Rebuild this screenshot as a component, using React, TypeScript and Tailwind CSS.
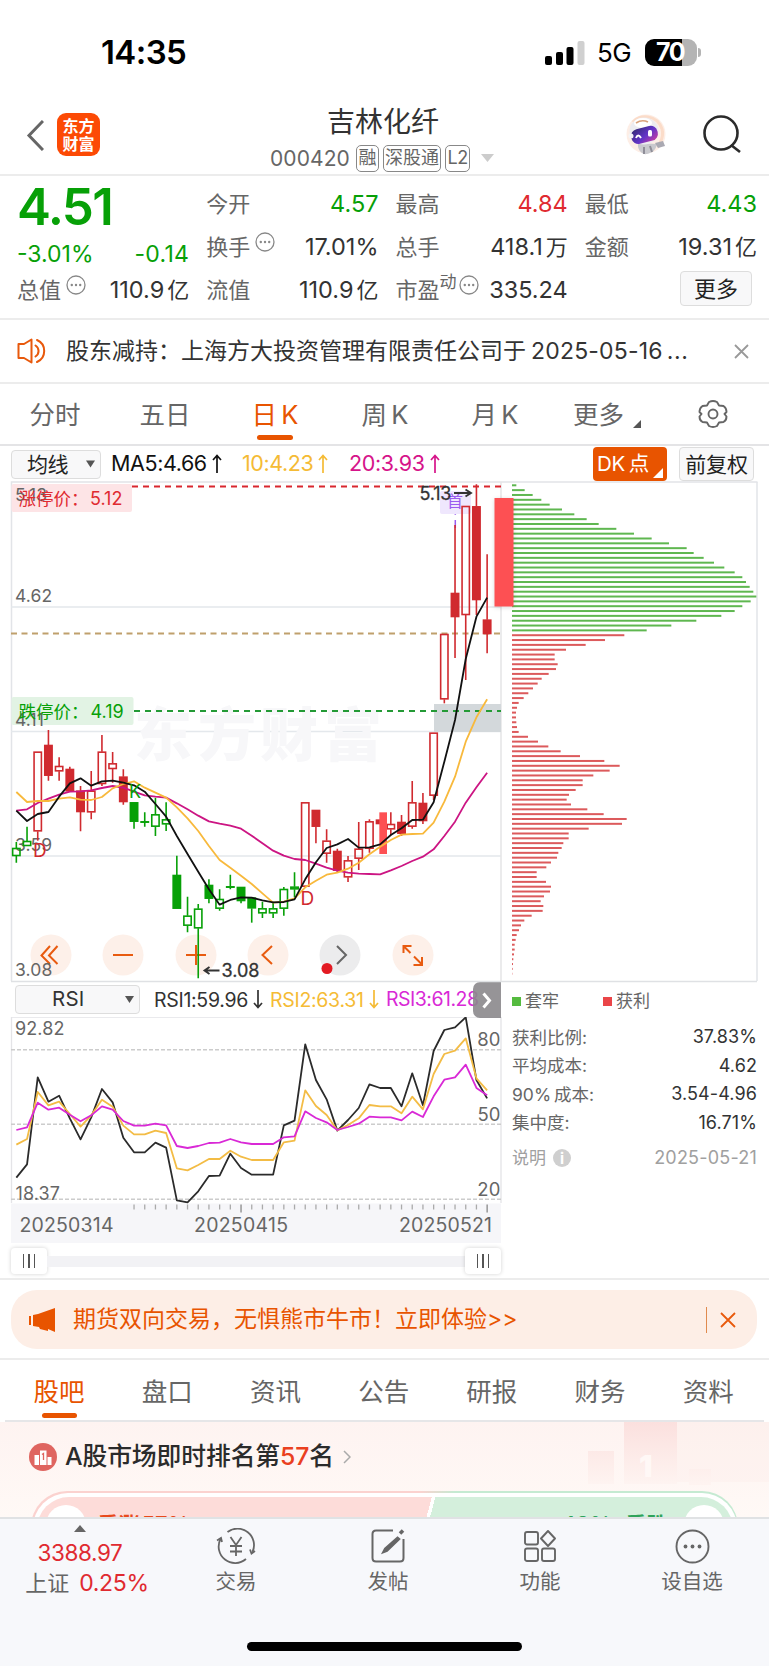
import React from 'react';

type Candle = [top: number, bottom: number, high: number, low: number, kind: 'r' | 'R' | 'g' | 'G'];

// Upper case kinds are filled bodies. Three chart units make one pixel.
const candles: Candle[] = [
  [384, 408, 366, 428, 'g'], [363, 378, 320, 378, 'g'], [95, 334, 95, 362, 'r'],
  [75, 167, 30, 182, 'R'], [138, 154, 112, 182, 'r'], [147, 214, 140, 214, 'R'],
  [212, 276, 198, 334, 'R'], [212, 277, 153, 298, 'r'], [95, 192, 45, 198, 'r'],
  [130, 147, 96, 188, 'r'], [170, 246, 148, 254, 'R'], [247, 305, 247, 326, 'G'],
  [304, 307, 277, 320, 'G'], [283, 320, 233, 348, 'g'], [298, 313, 247, 333, 'g'],
  [465, 566, 407, 566, 'G'], [587, 617, 530, 637, 'g'], [566, 625, 552, 775, 'g'],
  [495, 536, 478, 550, 'G'], [537, 566, 508, 572, 'g'], [499, 502, 464, 508, 'G'],
  [501, 543, 501, 550, 'G'], [533, 565, 533, 608, 'G'], [565, 580, 545, 594, 'g'],
  [565, 580, 545, 594, 'g'], [507, 566, 501, 587, 'g'], [500, 508, 457, 532, 'g'],
  [247, 500, 247, 500, 'r'], [270, 320, 270, 370, 'R'], [362, 401, 328, 428, 'r'],
  [393, 452, 386, 458, 'R'], [421, 472, 408, 486, 'r'], [386, 416, 306, 450, 'r'],
  [304, 386, 298, 398, 'r'], [299, 312, 299, 312, 'R'], [312, 328, 277, 346, 'r'],
  [306, 341, 285, 348, 'R'], [247, 320, 183, 326, 'r'], [249, 303, 219, 312, 'R'],
  [38, 227, 38, 240, 'r'], [-258, -62, -258, -50, 'r'], [-381, -309, -585, -186, 'R'],
  [-642, -315, -642, -120, 'r'], [-641, -360, -707, -315, 'R'], [-301, -258, -497, -200, 'R'],
];

const ma5 = [272, 303, 282, 276, 230, 190, 175, 197, 184, 182, 188, 196, 215, 252, 290, 348, 402, 455, 508, 554, 540, 532, 533, 541, 547, 546, 538, 478, 427, 384, 373, 357, 383, 382, 373, 345, 325, 300, 299, 247, 125, 0, -183, -310, -367];
const ma10 = [216, 246, 243, 243, 236, 232, 239, 240, 231, 205, 192, 184, 203, 218, 233, 262, 295, 333, 378, 420, 443, 467, 492, 520, 548, 545, 535, 502, 482, 464, 458, 446, 428, 403, 380, 360, 344, 342, 341, 308, 245, 170, 65, -8, -62];
const ma20 = [272, 268, 249, 236, 224, 215, 214, 211, 204, 198, 203, 215, 226, 230, 233, 250, 268, 287, 304, 311, 317, 326, 347, 370, 392, 407, 417, 420, 431, 443, 452, 458, 461, 462, 463, 451, 438, 423, 410, 388, 348, 305, 248, 202, 158];

const rsi1 = [593, 553, 292, 365, 347, 415, 478, 412, 327, 367, 473, 517, 517, 488, 503, 661, 667, 634, 588, 587, 521, 564, 584, 584, 584, 436, 422, 193, 300, 358, 452, 420, 384, 313, 324, 324, 379, 280, 376, 213, 150, 142, 112, 300, 355];
const rsi2 = [494, 477, 336, 376, 365, 402, 440, 406, 359, 380, 437, 463, 463, 452, 459, 565, 571, 555, 537, 537, 512, 530, 540, 540, 540, 487, 482, 331, 378, 405, 451, 435, 415, 375, 379, 379, 400, 350, 388, 282, 222, 212, 175, 295, 331];
const rsi3 = [450, 442, 368, 389, 383, 404, 424, 406, 379, 389, 423, 437, 437, 431, 436, 498, 504, 498, 489, 488, 477, 487, 492, 492, 492, 472, 469, 394, 414, 427, 450, 441, 431, 410, 412, 412, 421, 395, 411, 349, 299, 292, 254, 324, 346];

const trapped = [13, 38, 62, 88, 113, 150, 187, 224, 260, 313, 366, 419, 471, 524, 545, 575, 606, 637, 668, 691, 702, 713, 724, 733, 716, 691, 668, 628, 553, 478, 404];
const profit = [337, 279, 221, 162, 128, 128, 137, 132, 110, 89, 77, 63, 49, 35, 20, 15, 12, 12, 13, 15, 20, 48, 78, 109, 146, 204, 277, 323, 293, 244, 212, 212, 191, 171, 164, 177, 226, 275, 344, 330, 230, 170, 170, 154, 149, 139, 135, 117, 103, 74, 74, 102, 117, 114, 96, 86, 94, 92, 59, 37, 27, 21, 14, 11, 8, 8, 6, 4, 3, 2, 1];

const xAt = (i: number) => 49 + i * 32.1;
const toPoints = (values: number[]) => values.map((v, i) => `${xAt(i)},${v}`).join(' ');

const RED = '#d02a2f';
const GREEN = '#07a007';

const StatusBar: React.FC = () => (
  <div className="flex h-[98px] items-center pl-[101px] pr-[68px] pt-[7px]">
    <span className="text-[33px] font-semibold leading-none tracking-[-0.6px] text-black">14:35</span>
    <svg className="ml-auto" width="40" height="26" viewBox="0 0 40 26">
      <rect x="0" y="16" width="7" height="9" rx="2" />
      <rect x="11" y="12" width="7" height="13" rx="2" />
      <rect x="21.500" y="7" width="7" height="18" rx="2" />
      <rect x="32.500" y="1" width="7" height="24" rx="2" fill="#d0d0d0" />
    </svg>
    <span className="ml-[12px] w-[36px] text-[26px] leading-none tracking-[-0.5px] text-black">5G</span>
    <div className="ml-[12px] flex h-[27px] w-[52px] items-center justify-center rounded-[9px] bg-[linear-gradient(90deg,#000_71%,#b4b4b4_71%)] pr-[2px] text-[25px] font-bold leading-none tracking-[-1.5px] text-white">
      70
    </div>
    <div className="ml-[1px] h-[9px] w-[3px] rounded-r-full bg-[#b4b4b4]" />
  </div>
);

const Header: React.FC = () => (
  <header className="flex h-[78px] items-start border-b-2 border-[#ececec] pl-[26px] pr-[27px]">
    <svg className="mt-[22px]" width="18" height="31" viewBox="0 0 18 31" fill="none" stroke="#666" strokeWidth="3">
      <path d="M17 1 3 15.500 17 30" />
    </svg>
    <div className="ml-[13px] mt-[15px] flex h-[43px] w-[43px] flex-col items-center justify-center rounded-[9px] bg-[#fc4a05] text-[16px] font-bold leading-[18px] text-white">
      <span>东方</span>
      <span>财富</span>
    </div>
    <div className="ml-[170px] w-[224px]">
      <h1 className="mt-[9px] pl-[57px] text-[28px] leading-[30px] text-[#333]">吉林化纤</h1>
      <div className="mt-[7px] flex h-[28px] items-center gap-[4px] text-[#666]">
        <span className="w-[82px] text-[21px] leading-none tracking-[0.1px]">000420</span>
        <span className="ml-[1px] flex h-[27px] w-[23px] items-center justify-center rounded-[5px] border border-[#888] text-[18px] leading-none">融</span>
        <span className="flex h-[27px] w-[59px] items-center justify-center rounded-[5px] border border-[#888] text-[18px] leading-none">深股通</span>
        <span className="flex h-[27px] w-[25px] items-center justify-center rounded-[5px] border border-[#888] text-[18px] leading-none tracking-[-0.5px]">L2</span>
        <svg className="ml-[7px] shrink-0" width="13" height="8" viewBox="0 0 13 8"><path d="M0 0h13L6.500 8z" fill="#ccc" /></svg>
      </div>
    </div>
    <svg className="ml-auto mt-[16px]" width="44" height="44" viewBox="0 0 44 44">
      <defs>
        <linearGradient id="visor" x1="0" y1="0" x2="1" y2="1">
          <stop offset="0" stopColor="#312a6e" />
          <stop offset=".55" stopColor="#6234c8" />
          <stop offset="1" stopColor="#d23fa0" />
        </linearGradient>
      </defs>
      <circle cx="23" cy="20" r="19.500" fill="#fdeee6" />
      <path d="M10 8C16 0 34 0 39 15c1.500 5 0 10-2 14" fill="none" stroke="#fbdcc9" strokeWidth="3" />
      <path d="M15 29c-1 7 4 12 9 11s9-4 10-10z" fill="#c9c9ce" />
      <path d="M32 29l8-2 2 5-7 2z" fill="#aaa9b2" />
      <ellipse cx="21" cy="17" rx="14.500" ry="13.500" fill="#ececf0" />
      <ellipse cx="20" cy="9" rx="9" ry="5" fill="#fff" />
      <path d="M13 9q6-4 12-1" stroke="#d9a27b" strokeWidth="1.600" fill="none" />
      <rect x="8" y="13.500" width="27" height="15" rx="7" fill="url(#visor)" transform="rotate(-14 21 21)" />
      <path d="M13 24q2-5 5 0" stroke="#fff" strokeWidth="2" fill="none" />
      <rect x="25" y="16" width="4" height="6.500" rx="1.500" fill="#fff" />
      <circle cx="8" cy="22" r="2.500" fill="#f4f4f6" />
      <path d="M21 33v7M27 32l2 6" stroke="#8f8e98" strokeWidth="2" />
    </svg>
    <svg className="ml-[36px] mt-[17px]" width="39" height="39" viewBox="0 0 39 39" fill="none" stroke="#2b2b2b" strokeWidth="2.600">
      <circle cx="18" cy="18" r="16.500" />
      <path d="M28 30 37 37" />
    </svg>
  </header>
);

const Dots: React.FC = () => (
  <svg className="mb-[10px] ml-[5px] shrink-0" width="20" height="20" viewBox="0 0 20 20" fill="none" stroke="#888" strokeWidth="1.300">
    <circle cx="10" cy="10" r="9" />
    <g fill="#888" stroke="none"><circle cx="5.800" cy="10" r="1.200" /><circle cx="10" cy="10" r="1.200" /><circle cx="14.200" cy="10" r="1.200" /></g>
  </svg>
);

interface StatProps {
  label: string;
  value: string;
  unit?: string;
  valueClass?: string;
  dots?: boolean;
  sup?: string;
}

const Stat: React.FC<StatProps> = ({ label, value, unit, valueClass = 'text-[#333]', dots, sup }) => (
  <div className="flex h-[43px] items-center whitespace-nowrap text-[22px] leading-none">
    <span className="text-[#666]">{label}</span>
    {sup && <span className="mb-[14px] text-[17px] text-[#666]">{sup}</span>}
    {dots && (sup ? <span className="-ml-[3px]"><Dots /></span> : <Dots />)}
    <span className={`ml-auto text-[23.500px] ${valueClass}`}>{value}</span>
    {unit && <span className="ml-[3px] text-[#333]">{unit}</span>}
  </div>
);

const Quote: React.FC = () => (
  <section className="grid h-[144px] grid-cols-4 gap-x-[17px] border-b-2 border-[#ececec] pl-[17px] pr-[12px] pt-[6px]">
    <div>
      <div className="h-[52px] pt-[1px] text-[51px] font-semibold leading-[48px] tracking-[-1.600px] text-[#07a007]">4.51</div>
      <div className="flex h-[34px] items-center justify-between pt-[6px] text-[23px] leading-none text-[#07a007]">
        <span>-3.01%</span>
        <span className="tracking-[0.3px]">-0.14</span>
      </div>
      <Stat label="总值" value="110.9" unit="亿" dots />
    </div>
    <div>
      <Stat label="今开" value="4.57" valueClass="text-[#07a007]" />
      <Stat label="换手" value="17.01%" dots />
      <Stat label="流值" value="110.9" unit="亿" />
    </div>
    <div>
      <Stat label="最高" value="4.84" valueClass="text-[#e02a30]" />
      <Stat label="总手" value="418.1" unit="万" />
      <Stat label="市盈" sup="动" value="335.24" dots />
    </div>
    <div>
      <Stat label="最低" value="4.43" valueClass="text-[#07a007]" />
      <Stat label="金额" value="19.31" unit="亿" />
      <button className="ml-auto mr-[5px] mt-[3px] flex h-[35px] w-[72px] items-center justify-center rounded-[4px] border border-[#ddd] bg-[#f8f8f9] text-[22px] leading-none text-[#222]">更多</button>
    </div>
  </section>
);

const Notice: React.FC = () => (
  <section className="flex h-[64px] items-center border-b-2 border-[#ececec] pl-[17px] pr-[20px]">
    <svg width="31" height="26" viewBox="0 0 31 26" fill="none" stroke="#e8590c" strokeWidth="2" strokeLinejoin="round">
      <path d="M14.500 1.500v23L7 20H1.500V6H7z" />
      <path d="M18.500 7.500a6.500 6.500 0 0 1 0 11M20 2a12 12 0 0 1 0 22" strokeLinecap="round" />
    </svg>
    <div className="ml-[18px] flex items-center whitespace-nowrap text-[23px] leading-none text-[#333]">
      <span>股东减持：上海方大投资管理有限责任公司于</span>
      <span className="ml-[5px] tracking-[0.2px]">2025-05-16</span>
      <span className="ml-[4px] tracking-[0.6px]">...</span>
    </div>
    <svg className="ml-auto" width="15" height="15" viewBox="0 0 15 15" stroke="#999" strokeWidth="1.800"><path d="m1 1 13 13M14 1 1 14" /></svg>
  </section>
);

const periods = ['分时', '五日', '日 K', '周 K', '月 K'];

const PeriodTabs: React.FC = () => (
  <nav className="flex h-[62px] items-center border-b-2 border-[#e4e4e6] text-[25.500px] leading-none text-[#666]">
    {periods.map((p) => (
      <span key={p} className={`relative flex h-full w-[110px] items-center justify-center pt-[1px] [word-spacing:-3px] ${p === '日 K' ? 'text-[#e85400]' : ''}`}>
        {p}
        {p === '日 K' && <i className="absolute bottom-[4px] left-[37px] h-[5px] w-[36px] rounded-full bg-[#e85400]" />}
      </span>
    ))}
    <span className="ml-[23px] pt-[1px]">更多</span>
    <svg className="ml-[9px] mt-[20px]" width="8" height="8" viewBox="0 0 8 8"><path d="M8 0v8H0z" fill="#555" /></svg>
    <svg className="ml-[57px]" width="30" height="28" viewBox="0 0 30 28" fill="none" stroke="#666" strokeWidth="1.900" strokeLinejoin="round">
      <path d="M11 2q4-2 8 0l2 3.500 4.500.5q3 2 3 6l-2 2 2 2.500q0 4-3 5.500l-4.500.5L19 26q-4 2-8 0l-2-3.500L4.500 22q-3-1.500-3-5.500l2-2.500-2-2q0-4 3-6L9 5.500z" />
      <circle cx="15" cy="14" r="4.500" />
    </svg>
  </nav>
);

const Arrow: React.FC<{ down?: boolean }> = ({ down }) => (
  <svg className={`ml-[5px] inline-block align-[-2px] ${down ? 'rotate-180' : ''}`} width="10" height="19" viewBox="0 0 10 19" fill="none" stroke="currentColor" strokeWidth="1.700">
    <path d="M5 19V1.500M1 6l4-4.500L9 6" />
  </svg>
);

const MaBar: React.FC = () => (
  <div className="flex h-[35px] items-center pl-[11px] pt-px text-[21.500px] leading-none tracking-[-0.4px]">
    <button className="flex h-[29px] w-[90px] items-center rounded-[4px] border border-[#ddd] bg-[#f8f8f9] pl-[15px] text-[21px] text-[#222]">
      均线
      <svg className="ml-auto mr-[5px]" width="9" height="8" viewBox="0 0 10 8"><path d="M0 0h10L5 8z" fill="#555" /></svg>
    </button>
    <span className="ml-[10px] w-[131px] whitespace-nowrap text-[#111]">MA5:4.66<Arrow /></span>
    <span className="w-[107px] whitespace-nowrap text-[#f5bb35]">10:4.23<Arrow /></span>
    <span className="whitespace-nowrap text-[#d6148a]">20:3.93<Arrow /></span>
    <button className="relative ml-auto h-[34px] w-[74px] rounded-[4px] bg-[#e85400] pl-[4px] text-left text-[20.500px] tracking-[-0.2px] text-white [word-spacing:-2px]">
      DK 点
      <svg className="absolute bottom-[3px] right-[4px]" width="10" height="10" viewBox="0 0 10 10"><path d="M10 0v10H0z" fill="#fff" /></svg>
    </button>
    <button className="ml-[12px] mr-[15px] h-[34px] w-[75px] whitespace-nowrap rounded-[4px] border border-[#ddd] bg-[#f8f8f9] text-[21px] tracking-[-0.2px] text-[#222]">前复权</button>
  </div>
);

const KLineChart: React.FC = () => (
  <svg className="relative z-10 shrink-0 overflow-visible" width="502" height="501" viewBox="0 481 502 501" fill="none">
    <path d="M11.500 981V482h746" stroke="#e2e4e8" strokeWidth="1.500" />
    <path d="M11 981.500h746" stroke="#dfe1e4" strokeWidth="1.500" />
    <path d="M11 607h490M11 731.500h490M11 856h490" stroke="#e4e8ec" strokeWidth="1.500" />
    <path d="M501 482v499" stroke="#e4e4e6" strokeWidth="1.500" />
    <g fontSize="58" fontWeight="900" fill="#f7f7f9">
      <text x="134" y="756">东</text><text x="198" y="756">方</text><text x="260" y="756">财</text><text x="324" y="756">富</text>
    </g>
    <rect x="434" y="704" width="67" height="28" fill="#d3d8db" />

    <g fill="#fdf0e9">
      <circle cx="51" cy="955" r="20.500" /><circle cx="123" cy="955" r="20.500" /><circle cx="196" cy="955" r="20.500" />
      <circle cx="268" cy="955" r="20.500" /><circle cx="413" cy="955" r="20.500" />
    </g>
    <circle cx="340" cy="955" r="20.500" fill="#ececed" />
    <g stroke="#e85b10" strokeWidth="2">
      <path d="m50 946-8.500 9.500L50 964M57.500 946l-8.500 9.500 8.500 8.500M113 955h20M186 955h20M196 945v20M272 946l-9.500 9 9.500 9" />
      <path d="M410.500 953 403.500 946M403.500 953v-7h8M414 956.500l8 8M422 957v8h-8.500" />
    </g>
    <path d="m337 946 9 9-9 9" stroke="#666" strokeWidth="2" />
    <circle cx="327" cy="968.500" r="5.500" fill="#e31b23" />

    <rect x="11.500" y="484" width="120.500" height="28" rx="2" fill="#fde4e6" />
    <rect x="11.500" y="697" width="122" height="28" rx="2" fill="#e2f3e4" />
    <path d="M132 486.500h369" stroke="#d9272e" strokeWidth="1.800" strokeDasharray="6 5" />
    <path d="M11 633.500h490" stroke="#bfa06c" strokeWidth="1.800" strokeDasharray="6 4.500" />
    <path d="M134 711h367" stroke="#249a36" strokeWidth="1.800" strokeDasharray="6 5" />

    <g fontSize="17.500" fill="#666" letterSpacing=".15">
      <text x="15" y="501">5.13</text><text x="15" y="601.500">4.62</text><text x="15" y="725.500">4.11</text>
      <text x="15" y="850.500">3.59</text><text x="15" y="975.500">3.08</text>
    </g>
    <g fontSize="17.500">
      <text x="18.500" y="505" fill="#e02a30">涨停价：</text><text x="90" y="505" fontSize="18" fill="#e02a30">5.12</text>
      <text x="18.500" y="718" fill={GREEN}>跌停价：</text><text x="90.500" y="718" fontSize="18" fill={GREEN}>4.19</text>
    </g>

    <rect x="440" y="491" width="31" height="23" rx="2" fill="#efe7fd" />
    <text x="447" y="506.500" fontSize="16" fill="#9a5cf0">首</text>
    <path d="M455.300 514v.8M455.300 520v8" stroke="#9a5cf0" strokeWidth="1.500" />

    <g transform="translate(0 720) scale(.33333)">
      {candles.map(([top, bottom, high, low, kind], i) => {
        const color = kind === 'r' || kind === 'R' ? RED : GREEN;
        const filled = kind === 'R' || kind === 'G';
        const x = xAt(i);
        return (
          <g key={i} stroke={color} strokeWidth="4.800">
            <path d={`M${x} ${high}V${top}M${x} ${bottom}V${low}`} />
            <rect x={x - 11} y={top + 1.5} width="22" height={Math.max(bottom - top - 3, 1)} fill={filled ? color : 'none'} />
          </g>
        );
      })}
      <rect x="1138" y="277" width="23" height="125" fill="#fd5053" />
      <g strokeWidth="5.400" strokeLinejoin="round">
        <polyline points={toPoints(ma20)} stroke="#cc1583" />
        <polyline points={toPoints(ma10)} stroke="#f8b93c" />
        <polyline points={toPoints(ma5)} stroke="#111" />
      </g>
    </g>
    <text x="33" y="856.500" fontSize="19" fill={RED}>D</text>
    <text x="300.500" y="905" fontSize="19" fill={RED}>D</text>
    <text x="129" y="798" fontSize="18" fill={GREEN}>K</text>

    <text x="419.500" y="499.500" fontSize="18" letterSpacing="-.2" fill="#333" stroke="#333" strokeWidth=".3">5.13</text>
    <path d="M454 493h16M465.500 489.500l5.500 3.500-5.500 3.500" stroke="#333" strokeWidth="1.900" />
    <text x="221.500" y="976.500" fontSize="18" fill="#333" stroke="#333" strokeWidth=".3">3.08</text>
    <path d="M219.500 970.500h-14M209.500 967l-5 3.500 5 3.500" stroke="#333" strokeWidth="1.900" />
    <rect x="494.500" y="498" width="19" height="108.500" fill="#fd5053" className="drop-shadow-sm" />
  </svg>
);

const ChipChart: React.FC = () => (
  <svg className="shrink-0" width="267" height="501" viewBox="502 481 267 501">
    <path d="M757 482v499" stroke="#e2e4e8" strokeWidth="1.500" />
    {[...trapped, ...profit].map((w, i) => (
      <rect key={i} x="512" y={484.3 + i * 4.836} width={w / 3} height="2" fill={i < trapped.length ? '#5fb750' : '#dc5a5c'} />
    ))}
  </svg>
);

const RsiChart: React.FC = () => (
  <svg width="502" height="226" viewBox="0 1017 502 226" fill="none">
    <rect x="11" y="1203.500" width="490" height="39.500" fill="#f6f6f9" />
    <path d="M11.500 1203v-186H501v186" stroke="#e4e4e7" strokeWidth="1.300" />
    <path d="M11 1049.700h490M11 1124.300h490M11 1199.300h490" stroke="#ccc" strokeWidth="1.500" strokeDasharray="4 2" />
    <g transform="translate(0 980) scale(.33333)" strokeWidth="5.400" strokeLinejoin="round">
      <polyline points={toPoints(rsi1)} stroke="#2b2b2b" />
      <polyline points={toPoints(rsi2)} stroke="#f3bc45" />
      <polyline points={toPoints(rsi3)} stroke="#d929d6" />
    </g>
    {Array.from({ length: 34 }, (_, k) => {
      const big = k === 10 || k === 33;
      const x = xAt(k + 11) / 3;
      return <path key={k} d={`M${x} 1204.500v${big ? 8 : 5}`} stroke={big ? '#888' : '#aaa'} strokeWidth="1.300" />;
    })}
    <g fill="#666" fontSize="18" letterSpacing=".1">
      <text x="15" y="1034.500">92.82</text><text x="15.500" y="1200">18.37</text>
      <g fontSize="18.500" textAnchor="end">
        <text x="500.500" y="1046">80</text><text x="500.500" y="1121">50</text><text x="500.500" y="1195.500">20</text>
      </g>
    </g>
    <g fill="#666" fontSize="19.500">
      <text x="19.500" y="1232" textLength="94">20250314</text>
      <text x="194" y="1232" textLength="94">20250415</text>
      <text x="399" y="1232" textLength="93">20250521</text>
    </g>
  </svg>
);

const Handle: React.FC = () => (
  <div className="flex h-[26px] w-[36px] items-center justify-center gap-[4px] rounded-[4px] bg-white shadow-[0_0_4px_rgba(0,0,0,0.18)]">
    <i className="h-[14px] w-[1.500px] bg-[#555]" />
    <i className="h-[14px] w-[1.500px] bg-[#555]" />
    <i className="h-[14px] w-[1.500px] bg-[#555]" />
  </div>
);

const chipStats = [
  ['获利比例:', '37.83%'],
  ['平均成本:', '4.62'],
  ['90% 成本:', '3.54-4.96'],
  ['集中度:', '16.71%'],
];

const Indicators: React.FC = () => (
  <section className="flex h-[298px] border-b-2 border-[#ececec]">
    <div className="w-[502px]">
      <div className="relative flex h-[35px] items-center pl-[15px] text-[19.500px] leading-none tracking-[-0.3px]">
        <button className="flex h-[29px] w-[125px] items-center rounded-[4px] border border-[#ddd] bg-[#f8f8f9] pl-[36px] text-[20.500px] tracking-[0.2px] text-[#333]">
          RSI
          <svg className="ml-auto mr-[5px]" width="9" height="7" viewBox="0 0 9 7"><path d="M0 0h9L4.500 7z" fill="#555" /></svg>
        </button>
        <span className="ml-[14px] w-[116px] whitespace-nowrap pt-px text-[#333]">RSI1:59.96<Arrow down /></span>
        <span className="w-[116px] whitespace-nowrap pt-px text-[#f5bb35]">RSI2:63.31<Arrow down /></span>
        <span className="whitespace-nowrap pt-px tracking-[-0.5px] text-[#d929d6]">RSI3:61.28</span>
        <button className="absolute right-[1px] top-0 flex h-[36px] w-[28px] items-center justify-center rounded-l-[7px] bg-[#8b888c]/90">
          <svg width="10" height="17" viewBox="0 0 10 17" fill="none" stroke="#fff" strokeWidth="3"><path d="m1.500 1.500 6 7-6 7" /></svg>
        </button>
      </div>
      <RsiChart />
      <div className="ml-[11px] mr-px mt-[5px] flex items-center">
        <Handle />
        <div className="h-[11px] flex-1 bg-[#f2f2f5]" />
        <Handle />
      </div>
    </div>
    <div className="flex-1 pl-[10px] pr-[12px] pt-[5px] text-[17.500px] leading-none text-[#666]">
      <div className="flex h-[29px] items-center text-[17px]">
        <i className="mr-[4px] h-[9px] w-[9px] bg-[#55bb3f]" />套牢
        <i className="ml-[44px] mr-[4px] h-[9px] w-[9px] bg-[#ea4548]" />获利
      </div>
      <div className="mt-[7px]">
        {chipStats.map(([label, value]) => (
          <div key={label} className="flex h-[28.600px] items-center justify-between">
            <span className="[word-spacing:-2px]">{label}</span>
            <span className="text-[18px] tracking-[0.1px] text-[#333]">{value}</span>
          </div>
        ))}
      </div>
      <div className="mt-[7px] flex h-[28px] items-center text-[#a0a0a0]">
        <span className="text-[17px]">说明</span>
        <span className="ml-[7px] flex h-[18px] w-[18px] items-center justify-center rounded-full bg-[#cfcfcf] text-[15px] font-bold text-white">i</span>
        <span className="ml-auto text-[18px] tracking-[0.2px]">2025-05-21</span>
      </div>
    </div>
  </section>
);

const Banner: React.FC = () => (
  <section className="h-[80px] border-b-2 border-[#ececec] pl-[11px] pr-[12px] pt-[10px]">
    <div className="flex h-[59px] items-center rounded-[26px] bg-[#fdeee6] pl-[18px] pr-[21px] text-[#e85400]">
      <svg width="28" height="24" viewBox="0 0 28 24" fill="#e85400">
        <path d="M0 8h2v9H0zM4 7l5-1 17-6v24l-7-3v2l-8-2-1-2-6-1z" />
      </svg>
      <span className="ml-[16px] whitespace-nowrap text-[23px] leading-none">期货双向交易，无惧熊市牛市！立即体验&gt;&gt;</span>
      <i className="ml-auto h-[26px] w-[1.500px] bg-[#e08a4e]" />
      <svg className="ml-[13px]" width="16" height="16" viewBox="0 0 16 16" stroke="#e8590c" strokeWidth="1.800"><path d="m1 1 14 14M15 1 1 15" /></svg>
    </div>
  </section>
);

const sections = ['股吧', '盘口', '资讯', '公告', '研报', '财务', '资料'];

const SectionTabs: React.FC = () => (
  <nav className="mx-[5px] flex h-[62px] items-center border-b-2 border-[#e6e6e8] text-[25.500px] leading-none text-[#666]">
    {sections.map((s, i) => (
      <span key={s} className={`relative flex h-full w-[108.200px] items-center justify-center pt-[3px] ${i === 0 ? 'text-[#e85400]' : ''}`}>
        {s}
        {i === 0 && <i className="absolute bottom-[2px] left-[37px] h-[5px] w-[35px] rounded-full bg-[#e85400]" />}
      </span>
    ))}
  </nav>
);

const Ranking: React.FC = () => (
  <section className="relative h-[95px] overflow-hidden bg-[linear-gradient(180deg,#fef3f1,#fff9f6)]">
    <svg className="absolute right-0 top-0" width="250" height="64" viewBox="0 0 250 64">
      <defs>
        <linearGradient id="podium" x1="0" y1="0" x2="0" y2="1">
          <stop offset="0" stopColor="#fbe0de" />
          <stop offset="1" stopColor="#fef4f1" />
        </linearGradient>
      </defs>
      <path d="M105 0h145v60H105z" fill="#fbe6e3" opacity=".2" />
      <path d="M69 29h26v33H69zM105 0h53v62h-53zM170 47h22v16h-22z" fill="url(#podium)" />
      <text x="120" y="55" fontSize="30" fontWeight="900" fill="#fff8f6">1</text>
    </svg>
    <div className="relative flex h-[69px] items-center pl-[29px]">
      <svg width="28" height="28" viewBox="0 0 28 28">
        <circle cx="14" cy="14" r="14" fill="#df6560" />
        <path d="M5.500 12h4.500v10H5.500zM11 7.500h6.500V22H11zM18.500 14h4v8h-4z" fill="#fff" />
        <path d="m13 11.500 1.500-1V17" stroke="#df6560" strokeWidth="1.300" fill="none" />
      </svg>
      <span className="ml-[8px] text-[24.800px] font-medium leading-none tracking-[-0.1px] text-[#2b2b2b]">A股市场即时排名第<span className="text-[#ea4020]">57</span>名</span>
      <svg className="ml-[9px]" width="8" height="14" viewBox="0 0 8 14" fill="none" stroke="#aaa" strokeWidth="1.500"><path d="m1 1 6 6-6 6" /></svg>
    </div>
    <div className="relative mx-[31px] h-[60px] rounded-t-[36px] bg-[linear-gradient(90deg,#fbd2cf_55%,#c5ead2_60%)] p-[1.500px]">
      <div className="h-full rounded-t-[35px] bg-white px-[4px] pt-[4px]">
        <div className="flex h-full items-start justify-between rounded-t-[32px] bg-[linear-gradient(105deg,#fddcd9_55.600%,#fff_55.600%,#fff_56.100%,#d4efdc_56.100%)] px-[9px] pt-[8px] text-[21px] font-bold leading-none">
          <i className="h-[40px] w-[40px] rounded-full bg-white" />
          <span className="ml-[12px] mt-[9px] text-[#e84a1c]">看涨</span>
          <span className="ml-[2px] mt-[8px] text-[22px] font-medium text-[#e84a1c]">57%</span>
          <span className="ml-auto mt-[8px] text-[22px] font-medium text-[#2fa35a]">43%</span>
          <span className="ml-[14px] mr-[16px] mt-[9px] text-[#2fa35a]">看跌</span>
          <i className="h-[40px] w-[40px] rounded-full bg-white" />
        </div>
      </div>
    </div>
  </section>
);

const TradeIcon = () => (
  <svg width="40" height="36" viewBox="0 0 40 36" fill="none" stroke="#666" strokeWidth="1.800">
    <path d="M11.500 4A16.500 16.500 0 0 1 36.500 24M30 31A16.500 16.500 0 0 1 4.500 11" />
    <path d="M1 12.500 5 10l1 4M39 23l-3.500 2.500-1.500-4" />
    <path d="m14.500 9 5.500 8 5.500-8M20 17v11M14 18h12M14 23.500h12" />
  </svg>
);

const PostIcon = () => (
  <svg width="34" height="34" viewBox="0 0 34 34" fill="none" stroke="#666" strokeWidth="2">
    <path d="M22 1.500H5Q1.500 1.500 1.500 5v24q0 3.500 3.500 3.500h24q3.500 0 3.500-3.500V10" />
    <path d="m26.500 8.500 1.800 1.500L16 22l-4 1.500 2-4z" fill="#666" />
    <path d="m29 4.500 3-3" strokeWidth="3.500" />
  </svg>
);

const GridIcon = () => (
  <svg width="32" height="32" viewBox="0 0 32 32" fill="none" stroke="#666" strokeWidth="1.900">
    <rect x="1" y="2" width="13" height="12.500" rx="2" />
    <path d="m24 1 7 7.500-7 7.500-7-7.500z" strokeLinejoin="round" />
    <rect x="1" y="18.500" width="13" height="12.500" rx="2" />
    <rect x="18" y="18.500" width="13" height="12.500" rx="2" />
  </svg>
);

const MoreIcon = () => (
  <svg width="35" height="35" viewBox="0 0 35 35" fill="#666">
    <circle cx="17.500" cy="17.500" r="16" fill="none" stroke="#666" strokeWidth="1.900" />
    <circle cx="10.500" cy="17.500" r="1.900" /><circle cx="17.500" cy="17.500" r="1.900" /><circle cx="24.500" cy="17.500" r="1.900" />
  </svg>
);

const actions = [
  { label: '交易', Icon: TradeIcon },
  { label: '发帖', Icon: PostIcon },
  { label: '功能', Icon: GridIcon },
  { label: '设自选', Icon: MoreIcon },
];

const BottomBar: React.FC = () => (
  <footer className="flex h-[149px] flex-col border-t-2 border-[#e0e2e4] bg-[#f7f8fb]">
    <div className="flex h-[123px]">
      <div className="flex w-[160px] flex-col items-center whitespace-nowrap leading-none text-[#e02a30]">
        <svg className="mt-[6px]" width="12" height="7" viewBox="0 0 12 7"><path d="M6 0l6 7H0z" fill="#666" /></svg>
        <span className="mt-[10px] text-[22.500px] tracking-[-0.4px]">3388.97</span>
        <span className="mt-[7px] flex items-center pl-[14px] text-[23px] tracking-[-0.3px]"><span className="mr-[10px] text-[22px] tracking-normal text-[#666]">上证</span>0.25%</span>
      </div>
      {actions.map(({ label, Icon }) => (
        <div key={label} className="flex w-[152px] flex-col items-center text-[20.500px] leading-none text-[#666]">
          <div className="mt-[9px] flex h-[36px] items-center"><Icon /></div>
          <span className="mt-[8px]">{label}</span>
        </div>
      ))}
    </div>
    <div className="mx-auto h-[9px] w-[275px] rounded-full bg-black" />
  </footer>
);

const App: React.FC = () => (
  <main className="h-[1666px] w-[769px] overflow-hidden bg-white font-[Inter,'Noto_Sans_CJK_SC',sans-serif]">
    <StatusBar />
    <Header />
    <Quote />
    <Notice />
    <PeriodTabs />
    <MaBar />
    <div className="flex">
      <KLineChart />
      <ChipChart />
    </div>
    <Indicators />
    <Banner />
    <SectionTabs />
    <Ranking />
    <BottomBar />
  </main>
);

export default App;
